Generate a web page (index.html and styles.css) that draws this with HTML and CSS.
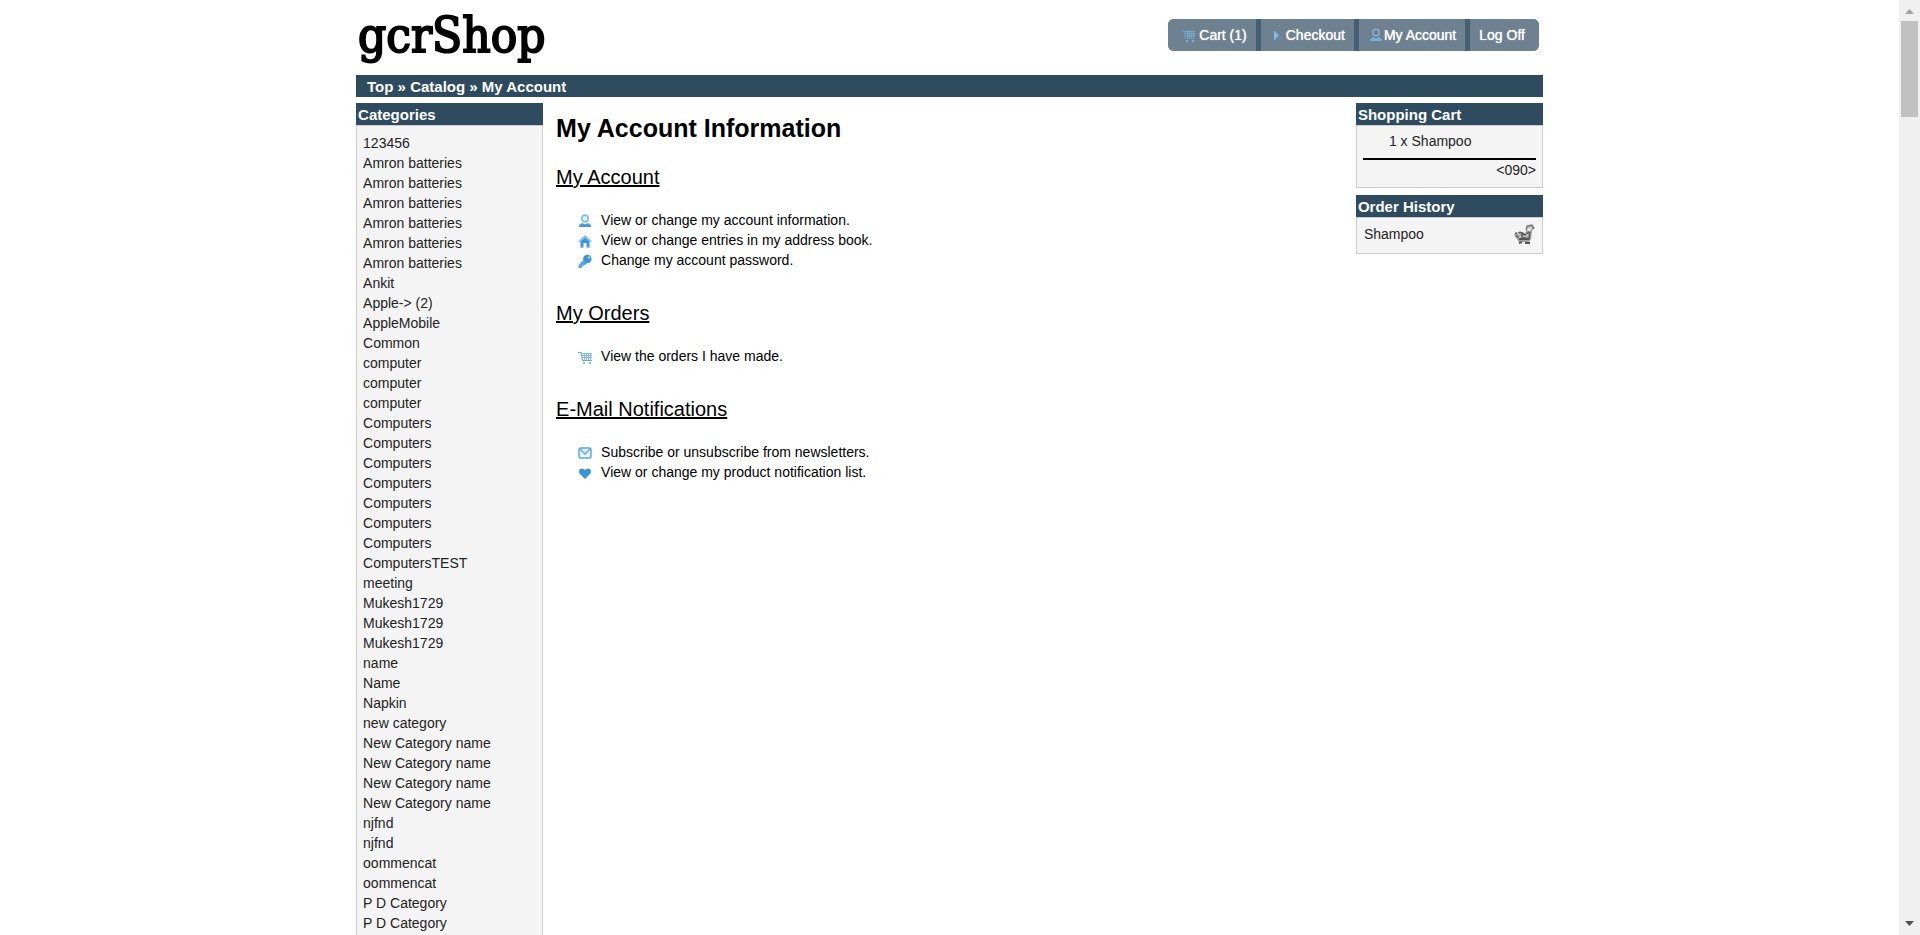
FILE: index.html
```html
<!DOCTYPE html>
<html lang="en">
<head>
<meta charset="utf-8">
<title>gcrShop</title>
<link rel="stylesheet" href="styles.css">
</head>
<body>
<svg width="0" height="0" class="sprite" aria-hidden="true">
  <symbol id="cart" viewBox="0 0 16 16">
    <path d="M1 3.500h3l1.500 8h9.500" fill="none" stroke="#5fa9e4" stroke-width="1.200"/>
    <path d="M5 4.500h10M5 6.500h10M5.500 8.500h9.500M7.500 4v7M9.500 4v7M11.500 4v7M13.500 4v7" stroke="#7fb9e8" stroke-width="1"/>
    <path d="M6 13h2v2H6zM12 13h2v2h-2z" fill="#86bdea"/>
  </symbol>
  <symbol id="person" viewBox="0 0 16 16">
    <circle cx="8" cy="5.500" r="3.300" fill="#e3f1fb" stroke="#7db9e8" stroke-width="1.700"/>
    <path d="M2 14v-1.500l3-2h1.500L8 11.500l1.500-1H11l3 2V14z" fill="#4297d9"/>
    <path d="M2 12l3-2 1 .5M14 12l-3-2-1 .5" fill="none" stroke="#8ac1ec"/>
  </symbol>
  <symbol id="navperson" viewBox="0 0 16 16">
    <circle cx="8" cy="5.500" r="3.300" fill="none" stroke="#8cc4f0" stroke-width="1.500"/>
    <path d="M2 14v-1.500l3-2.500 3 1.500 3-1.500 3 2.500V14z" fill="#7cc0f5"/>
  </symbol>
  <symbol id="home" viewBox="0 0 16 16">
    <path d="M1.500 8L8 2l6.500 6v1H1.500z" fill="#84bce9"/>
    <path d="M8 5l4.500 4v5.500H9.500V10h-3v4.500h-3V9z" fill="#3b93d8"/>
    <path d="M2.500 14h4M9.500 14h4" stroke="#84bce9"/>
  </symbol>
  <symbol id="key" viewBox="0 0 16 16">
    <path d="M7 6.500L1.500 12v3H5v-1.500h1.500V12H8l2.500-2.500z" fill="#5ba7e2"/>
    <circle cx="10.300" cy="6" r="4.200" fill="#3b93d8"/>
    <circle cx="12" cy="4.500" r="1.100" fill="#d6eafa"/>
  </symbol>
  <symbol id="mail" viewBox="0 0 16 16">
    <rect x="2" y="3" width="12" height="10" rx="1.500" fill="#e6f2fb" stroke="#5aa8e2" stroke-width="1.500"/>
    <path d="M3 4l5 5 5-5" fill="none" stroke="#5aa8e2" stroke-width="1.400"/>
  </symbol>
  <symbol id="heart" viewBox="0 0 16 16">
    <path d="M8 14L2.500 8.500C1.500 7 2 3.500 4.800 3.500 6.500 3.500 7.500 4.300 8 5.300c.5-1 1.500-1.800 3.200-1.800 2.800 0 3.300 3.500 2.300 5z" fill="#3b93d8"/>
  </symbol>
  <symbol id="arrow" viewBox="0 0 16 16"><path d="M4 3.500l5 5-5 5z" fill="#8fd0ff"/></symbol>
</svg>
<div class="window">
  <div class="page">
    <header class="header">
      <a class="logo" href="#">gcrShop</a>
      <nav class="nav">
        <a class="nav-cart" href="#"><svg class="icon"><use href="#cart"/></svg>Cart (1)</a>
        <a href="#"><svg class="icon"><use href="#arrow"/></svg>Checkout</a>
        <a href="#"><svg class="icon"><use href="#navperson"/></svg>My Account</a>
        <a href="#">Log Off</a>
      </nav>
    </header>
    <nav class="crumbs"><a href="#">Top</a> » <a href="#">Catalog</a> » <a href="#">My Account</a></nav>
    <div class="columns">
      <aside>
        <section class="box">
          <h3>Categories</h3>
          <ul class="categories">
            <li><a href="#">123456</a></li>
            <li><a href="#">Amron batteries</a></li>
            <li><a href="#">Amron batteries</a></li>
            <li><a href="#">Amron batteries</a></li>
            <li><a href="#">Amron batteries</a></li>
            <li><a href="#">Amron batteries</a></li>
            <li><a href="#">Amron batteries</a></li>
            <li><a href="#">Ankit</a></li>
            <li><a href="#">Apple-&gt;</a> (2)</li>
            <li><a href="#">AppleMobile</a></li>
            <li><a href="#">Common</a></li>
            <li><a href="#">computer</a></li>
            <li><a href="#">computer</a></li>
            <li><a href="#">computer</a></li>
            <li><a href="#">Computers</a></li>
            <li><a href="#">Computers</a></li>
            <li><a href="#">Computers</a></li>
            <li><a href="#">Computers</a></li>
            <li><a href="#">Computers</a></li>
            <li><a href="#">Computers</a></li>
            <li><a href="#">Computers</a></li>
            <li><a href="#">ComputersTEST</a></li>
            <li><a href="#">meeting</a></li>
            <li><a href="#">Mukesh1729</a></li>
            <li><a href="#">Mukesh1729</a></li>
            <li><a href="#">Mukesh1729</a></li>
            <li><a href="#">name</a></li>
            <li><a href="#">Name</a></li>
            <li><a href="#">Napkin</a></li>
            <li><a href="#">new category</a></li>
            <li><a href="#">New Category name</a></li>
            <li><a href="#">New Category name</a></li>
            <li><a href="#">New Category name</a></li>
            <li><a href="#">New Category name</a></li>
            <li><a href="#">njfnd</a></li>
            <li><a href="#">njfnd</a></li>
            <li><a href="#">oommencat</a></li>
            <li><a href="#">oommencat</a></li>
            <li><a href="#">P D Category</a></li>
            <li><a href="#">P D Category</a></li>
          </ul>
        </section>
      </aside>
      <main class="content">
        <h1>My Account Information</h1>
        <h2>My Account</h2>
        <ul class="links">
          <li><svg class="icon"><use href="#person"/></svg><a href="#">View or change my account information.</a></li>
          <li><svg class="icon"><use href="#home"/></svg><a href="#">View or change entries in my address book.</a></li>
          <li><svg class="icon"><use href="#key"/></svg><a href="#">Change my account password.</a></li>
        </ul>
        <h2>My Orders</h2>
        <ul class="links">
          <li><svg class="icon"><use href="#cart"/></svg><a href="#">View the orders I have made.</a></li>
        </ul>
        <h2>E-Mail Notifications</h2>
        <ul class="links">
          <li><svg class="icon"><use href="#mail"/></svg><a href="#">Subscribe or unsubscribe from newsletters.</a></li>
          <li><svg class="icon"><use href="#heart"/></svg><a href="#">View or change my product notification list.</a></li>
        </ul>
      </main>
      <aside>
        <section class="box">
          <h3>Shopping Cart</h3>
          <div class="basket">
            <p class="basket-item">1 x <a href="#">Shampoo</a></p>
            <p class="basket-total">&lt;090&gt;</p>
          </div>
        </section>
        <section class="box">
          <h3>Order History</h3>
          <div class="history">
            <a href="#">Shampoo</a>
            <a href="#" aria-label="Add to cart"><svg class="reorder" viewBox="0 0 22 22">
              <path d="M13 8l1-6 5-1 2 3-2 3-1 8-2 3-10 0-5-7 2-3 5 1z" fill="#a0a0a0"/>
              <path d="M13 6l1-4 5-1 2 3-2 1" fill="none" stroke="#777" stroke-width="1.200"/>
              <path d="M14.500 4l3.500-1 1 2-2 2-2.500 0z" fill="#e4e4e4"/>
              <path d="M2 9l3 1 2-2 5 3 4-3M3 12l4 2 2-3M9 8l1 6 5-2M17 8l-1 8" fill="none" stroke="#555" stroke-width="1.200"/>
              <path d="M4 9l3 2M11 8l2 1M10 12l3 1M6 14l2-2M14 10v3" stroke="#ddd" stroke-width="1.200"/>
              <path d="M6 15h10M6 19l3-1M12 19h5" fill="none" stroke="#555" stroke-width="2"/>
            </svg></a>
          </div>
        </section>
      </aside>
    </div>
  </div>
  <div class="scrollbar" aria-hidden="true">
    <svg class="scroll-arrow" viewBox="0 0 9 5"><path d="M0 5L4.500 0 9 5z" fill="#a3a3a3"/></svg>
    <div class="thumb"></div>
    <svg class="scroll-arrow last" viewBox="0 0 9 5"><path d="M0 0h9L4.500 5z" fill="#505050"/></svg>
  </div>
</div>
</body>
</html>
```
FILE: styles.css
```css
* { box-sizing: border-box; }
body {
  margin: 0;
  background: #fff;
  color: #000;
  font: 14px/20px "Liberation Sans", Arial, sans-serif;
}
h1, h2, h3, p, ul { margin: 0; padding: 0; }
ul { list-style: none; }
a { color: inherit; text-decoration: none; }
.sprite { position: absolute; }
.icon { width: 16px; height: 16px; flex: none; }

.window {
  display: grid;
  grid-template-columns: 1fr 21px;
  grid-template-rows: 100vh;
  overflow: hidden;
  height: 100vh;
}
.page { width: 62.5%; margin: 0 auto; }

.header {
  display: flex;
  justify-content: space-between;
  align-items: flex-start;
  height: 75px;
  padding-right: 4px;
}
.logo {
  padding-left: 2px;
  font: 49px/72px "DejaVu Serif Condensed", "DejaVu Serif", serif;
  -webkit-text-stroke: 2px #000;
}
.nav {
  display: flex;
  gap: 5px;
  margin-top: 19px;
  border-radius: 6px;
  overflow: hidden;
  background: #465f73;
  color: #fff;
}
.nav a {
  display: flex;
  align-items: center;
  height: 32px;
  padding: 0 9px;
  background: #6e8190;
  text-shadow: 0 0 1px #fff;
}
.nav .nav-cart { gap: 3px; padding-left: 12px; }
.nav a:last-child { padding-right: 14px; }
.nav .icon { opacity: .7; }

.crumbs {
  padding: 2px 11px 0;
  background: #2f4b5f;
  color: #fff;
  font-size: 15px;
  font-weight: bold;
}
.columns {
  display: grid;
  grid-template-columns: 187px 1fr 187px;
  gap: 13px;
  padding-top: 6px;
}

.box { margin-bottom: 7px; color: #222; }
.box h3 {
  padding: 2px 2px 0;
  background: #2f4b5f;
  color: #fff;
  font-size: 15px;
}
.categories, .basket, .history {
  border: 1px solid #ccc;
  background: #f4f4f4;
}
.categories { padding: 7px 6px; }
.basket { padding: 5px 6px; }
.basket-item {
  padding: 0 0 7px 26px;
  border-bottom: 2px solid #000;
}
.basket-total { padding-bottom: 2px; text-align: right; }
.history {
  display: flex;
  justify-content: space-between;
  padding: 6px 7px 7px;
}
.reorder { display: block; width: 22px; height: 22px; }

.content h1 { padding-top: 10px; font-size: 25px; line-height: 30px; }
.content h2 {
  margin-top: 22px;
  font-size: 20px;
  font-weight: normal;
  line-height: 24px;
  text-decoration: underline;
}
.links { padding: 21px 0 9px 21px; }
.links li { display: flex; gap: 8px; align-items: flex-end; }
.links .icon { margin-bottom: 1px; }

.scrollbar {
  display: flex;
  flex-direction: column;
  align-items: center;
  padding: 9px 2px;
  background: #f0f0f0;
}
.scroll-arrow { width: 9px; height: 5px; }
.thumb { width: 100%; height: 96px; margin-top: 7px; background: #c1c1c1; }
.last { margin-top: auto; }
```
